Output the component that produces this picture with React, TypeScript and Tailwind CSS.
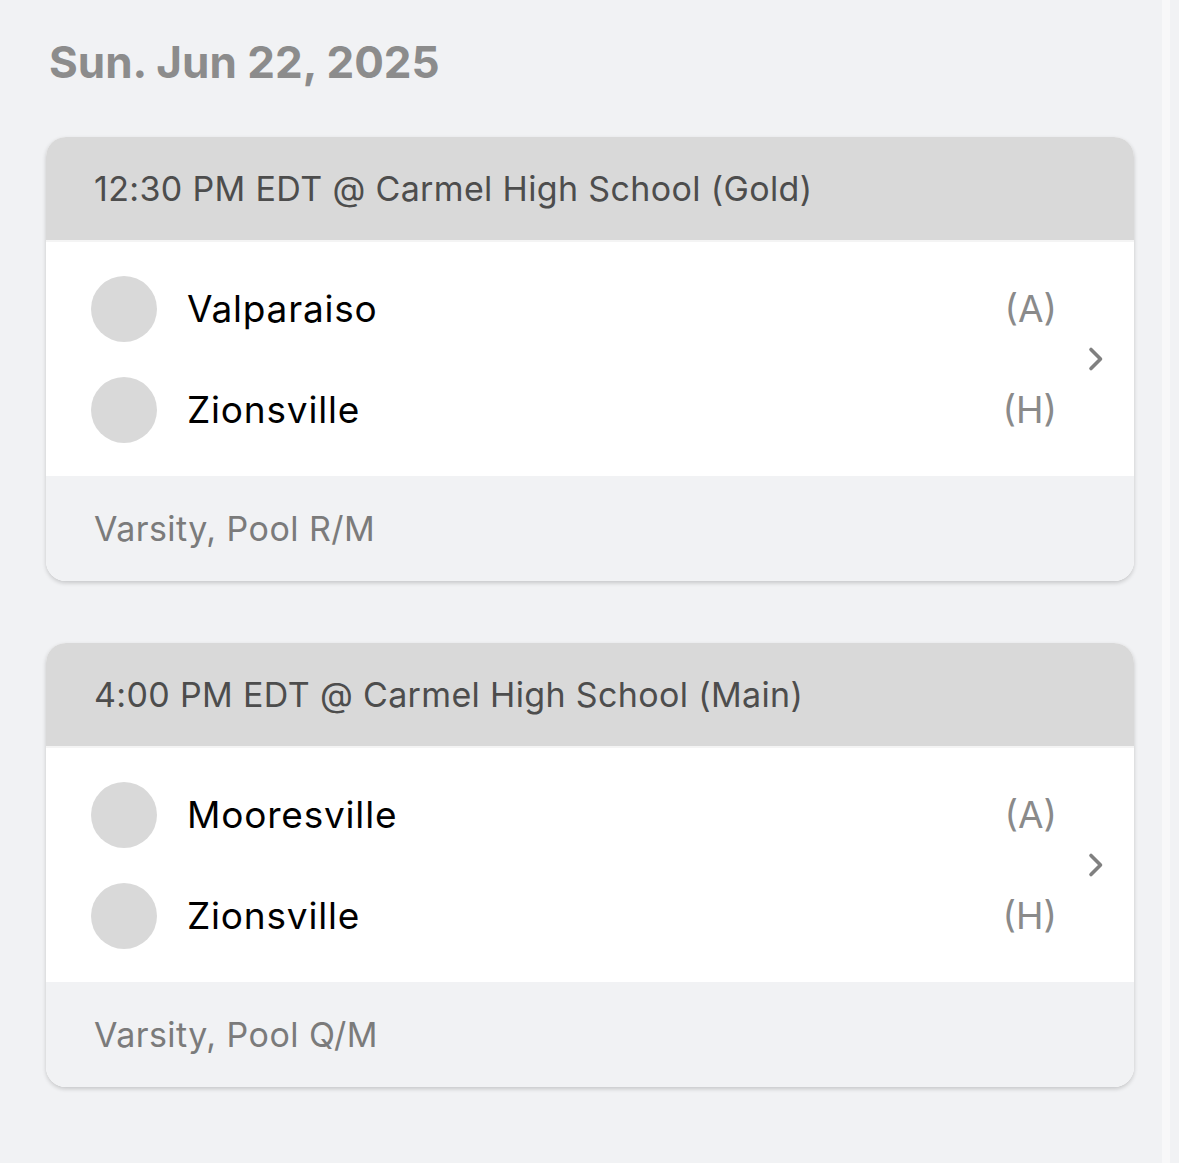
import React from "react";

type Game = {
  header: string;
  teams: { name: string; side: string }[];
  footer: string;
};

const games: Game[] = [
  {
    header: "12:30 PM EDT @ Carmel High School (Gold)",
    teams: [
      { name: "Valparaiso", side: "(A)" },
      { name: "Zionsville", side: "(H)" },
    ],
    footer: "Varsity, Pool R/M",
  },
  {
    header: "4:00 PM EDT @ Carmel High School (Main)",
    teams: [
      { name: "Mooresville", side: "(A)" },
      { name: "Zionsville", side: "(H)" },
    ],
    footer: "Varsity, Pool Q/M",
  },
];

function Chevron() {
  return (
    <svg width="20" height="30" viewBox="0 0 20 30" fill="none">
      <path d="M5 5.5 L14.5 15 L5 24.5" stroke="#808080" strokeWidth="3.6" strokeLinecap="round" strokeLinejoin="round" />
    </svg>
  );
}

function GameCard({ g }: { g: Game }) {
  return (
    <div className="rounded-[20px] overflow-hidden bg-white shadow-[0_2px_4px_rgba(0,0,0,0.18)]">
      <div className="h-[103px] bg-[#d9d9d9] flex items-center pl-[48px] text-[34px] text-[#4d4d4d] tracking-[0.35px]">
        {g.header}
      </div>
      <div className="h-[2px] bg-[#f4f4f4]" />
      <div className="h-[234px] bg-white flex items-center pr-[28px]">
        <div className="flex-1 flex flex-col gap-[35px] pl-[45px] pr-[29px]">
          {g.teams.map((t) => (
            <div key={t.name + t.side} className="h-[66px] flex items-center">
              <div className="w-[66px] h-[66px] rounded-full bg-[#d9d9d9] shrink-0" />
              <div className="ml-[30px] flex-1 text-[37px] text-black tracking-[0.8px]">{t.name}</div>
              <div className="text-[37px] text-[#8a8a8a]">{t.side}</div>
            </div>
          ))}
        </div>
        <Chevron />
      </div>
      <div className="h-[105px] bg-[#f1f2f4] flex items-center pl-[48px] text-[34px] text-[#7b7b7b] tracking-[0.45px]">
        {g.footer}
      </div>
    </div>
  );
}

export default function App() {
  return (
    <div
      className="w-[1179px] h-[1163px] bg-[#f1f2f4] flex overflow-hidden"
      style={{ fontFamily: "Inter, 'Open Sans', sans-serif" }}
    >
      <div className="w-[1162px] shrink-0 pl-[46px] pr-[28px]">
        <div className="pt-[36px] pl-[3px] text-[44px] font-bold text-[#8c8c8c] tracking-[0px] leading-[52px]">
          Sun. Jun 22, 2025
        </div>
        <div className="mt-[49px] flex flex-col gap-[62px]">
          {games.map((g) => (
            <GameCard key={g.header} g={g} />
          ))}
        </div>
      </div>
      <div className="w-[8px] bg-[#f8f8f9]" />
      <div className="flex-1 bg-[#f1f2f4]" />
    </div>
  );
}
